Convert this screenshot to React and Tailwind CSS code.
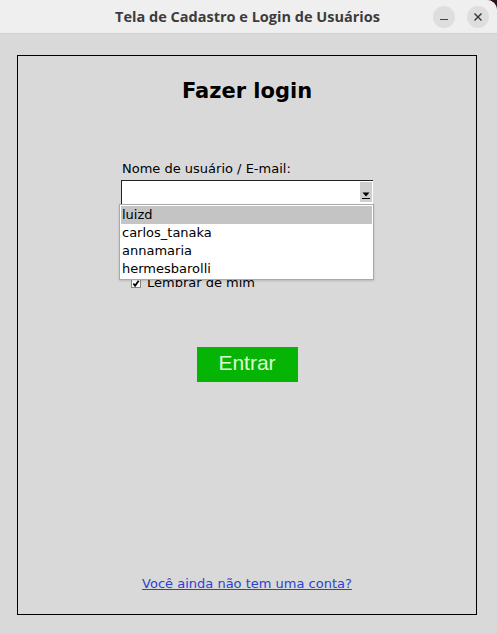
const users = ['luizd', 'carlos_tanaka', 'annamaria', 'hermesbarolli'];

export default function App() {
    const body = { fontFamily: '"DejaVu Sans", sans-serif' };

    return (
        <div className="h-[634px] w-[497px] overflow-hidden bg-[#2c1026]">
            <div className="flex h-full w-full flex-col overflow-hidden rounded-tr-[10px] bg-[#d9d9d9]">
                {/* title bar */}
                <div className="relative flex h-[34px] shrink-0 items-center justify-center border-b border-[#d0d0d0] bg-[#efefef]">
                    <span
                        className="pr-[2px] text-[14.5px] font-bold text-[#3c3c3c]"
                        style={{ fontFamily: '"Open Sans", sans-serif' }}
                    >
                        Tela de Cadastro e Login de Usuários
                    </span>
                    <div className="absolute right-[8px] top-[6px] flex gap-[12px]">
                        <span className="flex h-[22px] w-[22px] items-center justify-center rounded-full bg-[#dedede]">
                            <span className="mt-[5px] block h-[1.5px] w-[8px] bg-[#444]"></span>
                        </span>
                        <span className="flex h-[22px] w-[22px] items-center justify-center rounded-full bg-[#dedede]">
                            <svg width="10" height="10" viewBox="0 0 10 10">
                                <path d="M1.5 1.5 L8.5 8.5 M8.5 1.5 L1.5 8.5" stroke="#333" strokeWidth="1.4" />
                            </svg>
                        </span>
                    </div>
                </div>

                {/* frame */}
                <div className="px-[17px] pt-[21px]">
                    <div className="flex h-[560px] w-[460px] flex-col items-center border border-black pb-[22px] pt-[22px]" style={body}>
                        <h1 className="text-[21px] font-bold leading-[26px] text-black">Fazer login</h1>

                        <div className="mt-[57px] w-[252px]">
                            <div className="pl-[1px] text-[13px] leading-[16px] text-black">Nome de usuário / E-mail:</div>

                            <div className="relative mt-[3px]">
                                <div className="flex h-[24px] w-[252px] border-l border-t border-[#222] border-b-[#f4f4f4] border-r-[#222] bg-white">
                                    <div className="flex-1"></div>
                                    <div className="mr-[1px] mt-[1px] flex h-[20px] w-[12px] flex-col items-center justify-end bg-[#cfcfcf] pb-[3px]">
                                        <svg width="8" height="7" viewBox="0 0 8 7">
                                            <path d="M0.5 0.5 L7.5 0.5 L4 4.5 Z" fill="#000" />
                                            <path d="M0 6.5 L8 6.5" stroke="#000" strokeWidth="1" />
                                        </svg>
                                    </div>
                                </div>

                                <div className="absolute left-[-2px] top-[24px] z-10 w-[255px] border border-[#a9a9a9] bg-white px-[1px] py-[1px] shadow-[0_1px_2px_rgba(0,0,0,0.15)]">
                                    {users.map((user, i) => (
                                        <div
                                            key={user}
                                            className={`h-[18px] pl-[1px] text-[13px] leading-[18px] text-black ${
                                                i === 0 ? 'bg-[#c4c4c4]' : ''
                                            }`}
                                        >
                                            {user}
                                        </div>
                                    ))}
                                </div>
                            </div>

                            <div className="mt-[71px] flex items-center gap-[6px] pl-[10px] text-[13px] leading-[16px] text-black">
                                <span className="flex h-[10px] w-[10px] items-center justify-center border border-[#888] bg-white">
                                    <svg width="9" height="9" viewBox="0 0 9 9">
                                        <path d="M1.5 4.5 L3.5 7 L7.5 1.5" stroke="#000" strokeWidth="2" fill="none" />
                                    </svg>
                                </span>
                                Lembrar de mim
                            </div>
                        </div>

                        <button
                            type="button"
                            className="mt-[56px] flex h-[35px] w-[101px] items-center justify-center bg-[#05b405] pb-[4px] text-[21px] text-[#dcffd2]"
                            style={{ fontFamily: '"Liberation Sans", Arial, sans-serif' }}
                        >
                            Entrar
                        </button>

                        <a className="mt-auto text-[13px] leading-[16px] text-[#2b43d0] underline" href="#">
                            Você ainda não tem uma conta?
                        </a>
                    </div>
                </div>
            </div>
        </div>
    );
}
